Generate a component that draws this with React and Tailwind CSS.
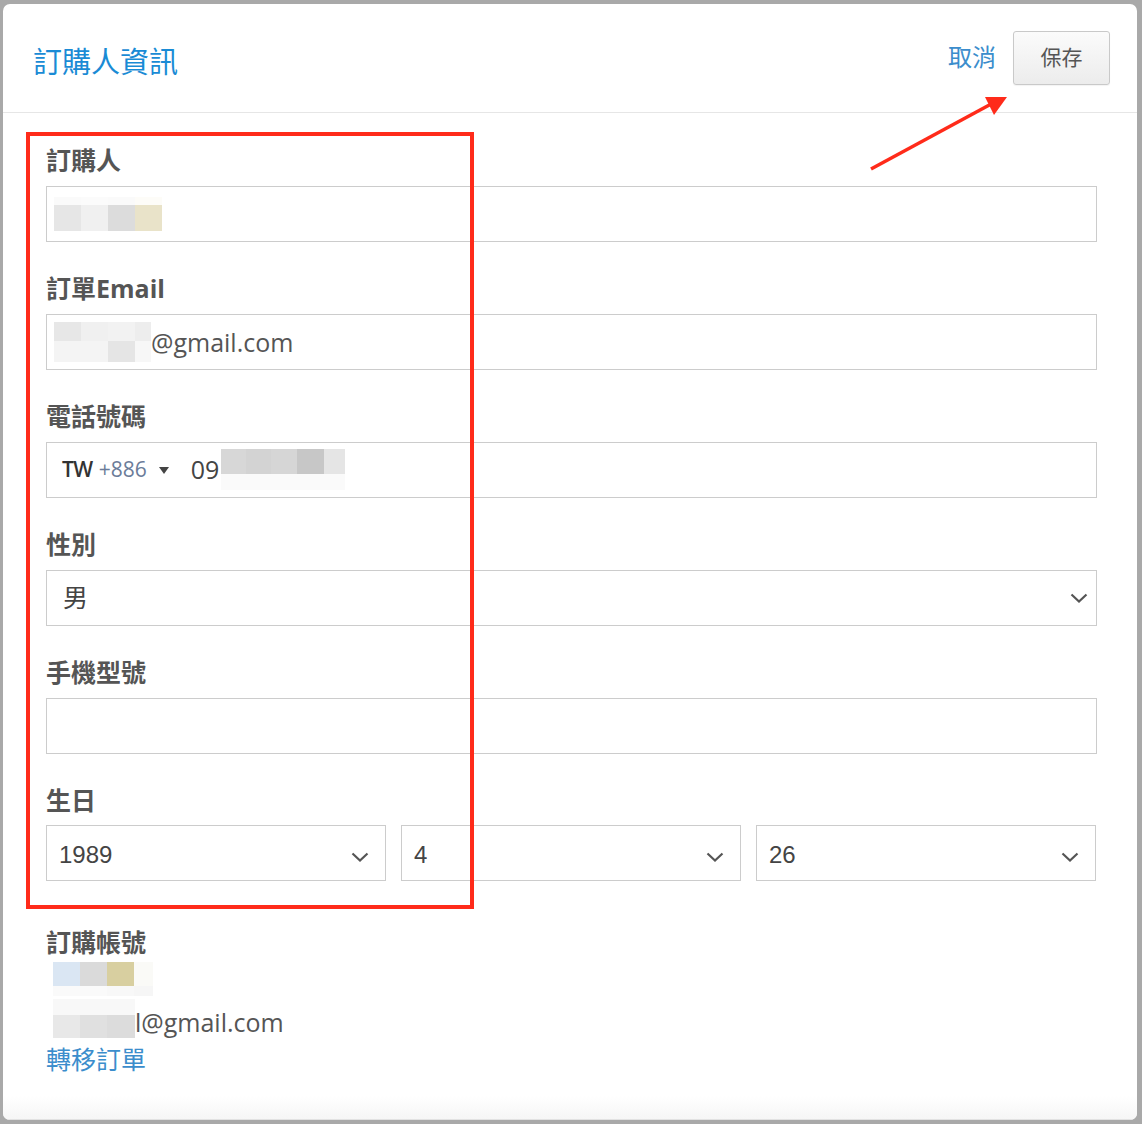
const cjk = "font-['Open_Sans','Noto_Sans_CJK_TC',sans-serif]";

function Blocks({ rows, w = 27 }) {
  // mosaic used to blur personal data
  return (
    <span className="inline-flex flex-col align-middle">
      {rows.map((r, i) => (
        <span key={i} className="flex" style={{ height: r.h }}>
          {r.c.map((c, j) => (
            <span key={j} style={{ background: c, width: r.w ? r.w[j] : w }} />
          ))}
        </span>
      ))}
    </span>
  );
}

function Label({ children }) {
  return <div className="h-[32px] leading-[32px] text-[25px] font-bold text-[#555]">{children}</div>;
}

function Box({ children, className = "" }) {
  return (
    <div className={`mt-[10px] h-[56px] border border-[#cccccc] bg-white flex items-center ${className}`}>
      {children}
    </div>
  );
}

function Chevron({ className = "" }) {
  return (
    <svg width="18" height="10" viewBox="0 0 18 10" className={`shrink-0 ${className}`}>
      <path d="M1.5 1.5 L9 8.5 L16.5 1.5" fill="none" stroke="#555" strokeWidth="2.2" />
    </svg>
  );
}

function DateSelect({ value }) {
  return (
    <div className="flex-1 h-[56px] border border-[#cccccc] flex items-center justify-between pl-[12px] pr-[16px] font-['Liberation_Sans',sans-serif] text-[24px] text-[#444]">
      <span className="pt-[3px]">{value}</span>
      <Chevron className="mt-[7px]" />
    </div>
  );
}

export default function App() {
  return (
    <div className={`relative w-[1142px] h-[1124px] bg-[#a9a9a9] pt-[4px] pl-[3px] pr-[5px] pb-[4px] ${cjk}`}>
      <div className="h-full bg-white rounded-[7px] flex flex-col overflow-hidden">
        {/* header */}
        <div className="h-[109px] shrink-0 border-b border-[#e6e6e6] flex items-center justify-between pl-[30px] pr-[27px]">
          <div className="pt-[7px] text-[29px] text-[#1a8bd5]">訂購人資訊</div>
          <div className="flex items-center gap-[17px]">
            <span className="text-[24px] text-[#3b8dcc] pb-[2px]">取消</span>
            <button className="w-[97px] h-[54px] rounded-[3px] border border-[#c9c9c9] bg-gradient-to-b from-[#fbfbfb] to-[#ececec] text-[21px] text-[#555] shadow-[0_1px_1px_rgba(0,0,0,0.05)]">
              保存
            </button>
          </div>
        </div>

        {/* form */}
        <div className="flex-1 pl-[43px] pr-[40px] pt-[31px] text-[#555]">
          <Label>訂購人</Label>
          <Box className="pl-[7px]">
            <Blocks rows={[{ h: 8, c: ["#fafafa", "#fbfbfb", "#fafafa", "#fdfcf8"] }, { h: 26, c: ["#e6e6e6", "#f0f0f0", "#dcdcdc", "#e9e3c9"] }]} />
          </Box>

          <div className="mt-[30px]">
            <Label>訂單Email</Label>
            <Box className="pl-[7px] text-[25px]">
              <Blocks rows={[{ h: 19, w: [27, 27, 27, 16], c: ["#e7e7e7", "#f0f0f0", "#f2f2f2", "#ededed"] }, { h: 21, w: [27, 27, 27, 16], c: ["#f4f4f4", "#f4f4f4", "#e5e5e5", "#f7f7f7"] }]} />
              <span className="leading-none">@gmail.com</span>
            </Box>
          </div>

          <div className="mt-[30px]">
            <Label>電話號碼</Label>
            <Box className="pl-[15px]">
              <span className="text-[21px] font-semibold text-[#333] tracking-[-0.5px]">TW</span>
              <span className="ml-[6px] text-[21px] text-[#6b7c99]">+886</span>
              <svg width="10" height="7" viewBox="0 0 10 7" className="ml-[12px]">
                <path d="M0 0 L10 0 L5 7 Z" fill="#444" />
              </svg>
              <span className="ml-[22px] text-[25px] text-[#444]">09</span>
              <span className="-mt-[1px] ml-[2px]">
                <Blocks rows={[{ h: 25, w: [25, 25, 26, 27, 21], c: ["#d7d7d7", "#d3d3d3", "#d6d6d6", "#c7c7c7", "#e5e5e5"] }, { h: 16, w: [124], c: ["#fafafa"] }]} />
              </span>
            </Box>
          </div>

          <div className="mt-[30px]">
            <Label>性別</Label>
            <Box className="pl-[16px] pr-[8px] justify-between text-[25px] text-[#444]">
              <span>男</span>
              <Chevron />
            </Box>
          </div>

          <div className="mt-[30px]">
            <Label>手機型號</Label>
            <Box />
          </div>

          <div className="mt-[30px]">
            <Label>生日</Label>
            <div className="mt-[9px] flex gap-[15px] pr-[1px]">
              <DateSelect value="1989" />
              <DateSelect value="4" />
              <DateSelect value="26" />
            </div>
          </div>

          <div className="mt-[45px]">
            <Label>訂購帳號</Label>
            <div className="mt-[4px] pl-[7px] text-[25px] text-[#555]">
              <div className="h-[36px] flex items-start">
                <Blocks rows={[{ h: 24, w: [27, 27, 27, 19], c: ["#dae6f3", "#dadada", "#d8cfa0", "#fafaf7"] }, { h: 10, w: [27, 27, 27, 19], c: ["#fafafa", "#fafafa", "#f8f8f8", "#f6f6f6"] }]} />
              </div>
              <div className="h-[40px] flex items-end">
                <Blocks rows={[{ h: 16, w: [82], c: ["#f8f8f8"] }, { h: 23, w: [27, 27, 28], c: ["#e8e8e8", "#e0e0e0", "#dcdcdc"] }]} />
                <span className="leading-[30px] pb-[1px]">l@gmail.com</span>
              </div>
            </div>
            <div className="mt-[3px] text-[25px] leading-[36px] text-[#3b8dcc]">轉移訂單</div>
          </div>
        </div>

        <div className="h-[24px] shrink-0 bg-gradient-to-b from-white to-[#f6f6f6] border-b border-[#e2e2e2]" />
      </div>

      {/* annotation overlay */}
      <div className="absolute left-[26px] top-[132px] w-[448px] h-[777px] border-4 border-[#ff2b1a] pointer-events-none" />
      <svg className="absolute left-0 top-0 pointer-events-none" width="1142" height="1124">
        <line x1="871" y1="169" x2="993" y2="103" stroke="#ff2b1a" strokeWidth="3.5" />
        <path d="M1007 97 L985 97 L994 115 Z" fill="#ff2b1a" />
      </svg>
    </div>
  );
}
